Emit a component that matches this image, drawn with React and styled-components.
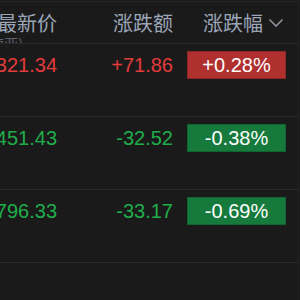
import React from "react";
import styled, { createGlobalStyle } from "styled-components";

const Global = createGlobalStyle`
  html, body { margin: 0; padding: 0; background: #1a1a1a; }
  body { font-family: "Liberation Sans", "Noto Sans CJK SC", Arial, sans-serif; }
`;

const Viewport = styled.div`
  width: 298px;
  height: 300px;
  overflow: hidden;
  background: #1a1a1a;
  border-right: 1px solid #212121;
  padding-top: 1px;
  box-sizing: content-box;
`;

const Table = styled.div`
  margin-left: -63px;
  width: 380px;
`;

const Grid = styled.div`
  display: grid;
  grid-template-columns: 120px 116px 140px;
`;

const Header = styled(Grid)`
  height: 41px;
  border-top: 1px solid #262626;
  border-bottom: 1px solid #2a2a2a;
  overflow: hidden;
`;

const HeadCell = styled.div`
  display: flex;
  flex-direction: column;
  align-items: ${(p) => (p.$left ? "flex-start" : "flex-end")};
  padding-top: 8px;
  padding-left: ${(p) => (p.$left ? "30px" : "0")};
  font-family: "Noto Sans CJK SC", sans-serif;
  color: #9aa6b8;
  font-size: 20px;
  line-height: 26px;
  white-space: nowrap;
`;

const HeadTitle = styled.div`
  display: flex;
  align-items: center;
  gap: 4px;
`;

const SubLabel = styled.div`
  font-size: 14px;
  line-height: 18px;
  margin-top: -2px;
  color: #5a616b;
  margin-right: 34px;
`;

const Row = styled(Grid)`
  height: 72px;
  border-bottom: 1px solid #2a2a2a;
  box-sizing: content-box;
`;

const NumCell = styled.div`
  display: flex;
  justify-content: flex-end;
  align-items: center;
  height: 28px;
  margin-top: 7px;
  font-size: 20px;
  color: ${(p) => (p.$up ? "#e33b3b" : "#1fae4a")};
  white-space: nowrap;
`;

const BadgeCell = styled.div`
  padding-left: 14px;
  padding-top: 7px;
`;

const Badge = styled.div`
  width: 99px;
  height: 28px;
  box-sizing: border-box;
  display: flex;
  align-items: center;
  justify-content: center;
  font-size: 20px;
  color: #ffffff;
  background: ${(p) => (p.$up ? "#b02f2f" : "#157a3c")};
  border: 1px solid ${(p) => (p.$up ? "#8f2626" : "#10652f")};
`;

const Chevron = () => (
  <svg width="16" height="10" viewBox="0 0 16 10" style={{ marginLeft: 1 }}>
    <path d="M1.5 1.5 L8 8 L14.5 1.5" fill="none" stroke="#8b9099" strokeWidth="1.6" />
  </svg>
);

const rows = [
  { price: "3321.34", chg: "+71.86", pct: "+0.28%", up: true },
  { price: "8451.43", chg: "-32.52", pct: "-0.38%", up: false },
  { price: "4796.33", chg: "-33.17", pct: "-0.69%", up: false },
];

export default function App() {
  return (
    <>
      <Global />
      <Viewport>
        <Table>
          <Header>
            <HeadCell>
              <HeadTitle>最新价</HeadTitle>
              <SubLabel>(东南亚)</SubLabel>
            </HeadCell>
            <HeadCell>
              <HeadTitle>涨跌额</HeadTitle>
            </HeadCell>
            <HeadCell $left>
              <HeadTitle>
                涨跌幅
                <Chevron />
              </HeadTitle>
            </HeadCell>
          </Header>
          {rows.map((r) => (
            <Row key={r.pct}>
              <NumCell $up={r.up}>{r.price}</NumCell>
              <NumCell $up={r.up}>{r.chg}</NumCell>
              <BadgeCell>
                <Badge $up={r.up}>{r.pct}</Badge>
              </BadgeCell>
            </Row>
          ))}
        </Table>
      </Viewport>
    </>
  );
}
